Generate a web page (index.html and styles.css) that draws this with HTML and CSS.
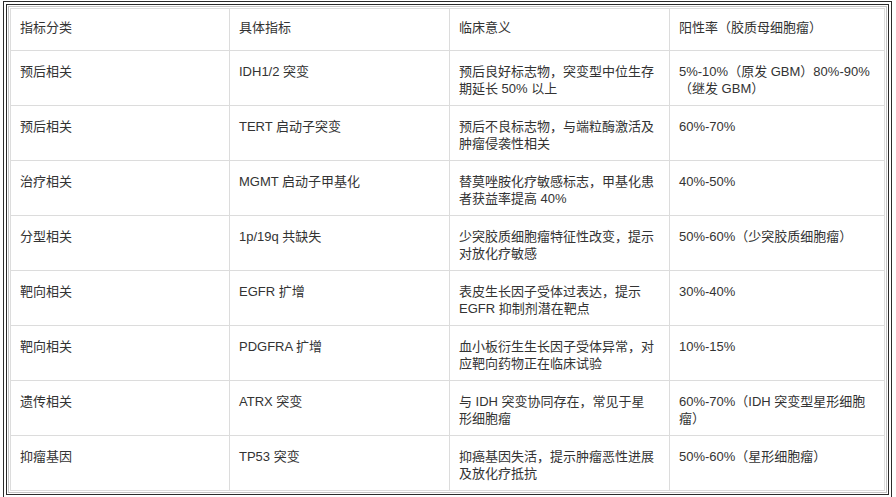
FILE: index.html
```html
<!DOCTYPE html>
<html lang="zh-CN">
<head>
<meta charset="utf-8">
<title>胶质母细胞瘤分子标志物</title>
<link rel="stylesheet" href="styles.css">
</head>
<body>
<div class="frame">
  <div class="inner">
    <table class="markers">
      <colgroup><col class="c1"><col class="c2"><col class="c3"><col class="c4"></colgroup>
      <thead>
        <tr><th>指标分类</th><th>具体指标</th><th>临床意义</th><th>阳性率（胶质母细胞瘤）</th></tr>
      </thead>
      <tbody>
        <tr><td>预后相关</td><td>IDH1/2 突变</td><td>预后良好标志物，突变型中位生存期延长 50% 以上</td><td>5%-10%（原发 GBM）80%-90%（继发 GBM）</td></tr>
        <tr><td>预后相关</td><td>TERT 启动子突变</td><td>预后不良标志物，与端粒酶激活及肿瘤侵袭性相关</td><td>60%-70%</td></tr>
        <tr><td>治疗相关</td><td>MGMT 启动子甲基化</td><td>替莫唑胺化疗敏感标志，甲基化患者获益率提高 40%</td><td>40%-50%</td></tr>
        <tr><td>分型相关</td><td>1p/19q 共缺失</td><td>少突胶质细胞瘤特征性改变，提示对放化疗敏感</td><td>50%-60%（少突胶质细胞瘤）</td></tr>
        <tr><td>靶向相关</td><td>EGFR 扩增</td><td>表皮生长因子受体过表达，提示 EGFR 抑制剂潜在靶点</td><td>30%-40%</td></tr>
        <tr><td>靶向相关</td><td>PDGFRA 扩增</td><td>血小板衍生生长因子受体异常，对应靶向药物正在临床试验</td><td>10%-15%</td></tr>
        <tr><td>遗传相关</td><td>ATRX 突变</td><td>与 IDH 突变协同存在，常见于星形细胞瘤</td><td>60%-70%（IDH 突变型星形细胞瘤）</td></tr>
        <tr><td>抑瘤基因</td><td>TP53 突变</td><td>抑癌基因失活，提示肿瘤恶性进展及放化疗抵抗</td><td>50%-60%（星形细胞瘤）</td></tr>
      </tbody>
    </table>
  </div>
</div>
</body>
</html>
```

FILE: styles.css
```css
html, body {
  margin: 0;
  padding: 0;
  background: #ffffff;
}

body {
  font-family: "Liberation Sans", "Noto Sans CJK SC", sans-serif;
  font-size: 13px;
  color: #333333;
}

.frame {
  margin: 1px 4px 1px 3px;
  border: 4px double #2b2b2b;
  padding: 1px;
}

.inner {
  border: 1px solid #c4c4c4;
  padding: 1px;
}

.markers {
  width: 100%;
  border-collapse: collapse;
  table-layout: fixed;
}

.c1 { width: 219px; }
.c2 { width: 220px; }
.c3 { width: 220px; }

.markers th,
.markers td {
  border: 1px solid #dcdcdc;
  text-align: left;
  vertical-align: top;
  font-weight: normal;
  line-height: 17px;
}

.markers th {
  padding: 10px 12px 14px 9px;
}

.markers td {
  padding: 12px 12px 8px 9px;
}
```
